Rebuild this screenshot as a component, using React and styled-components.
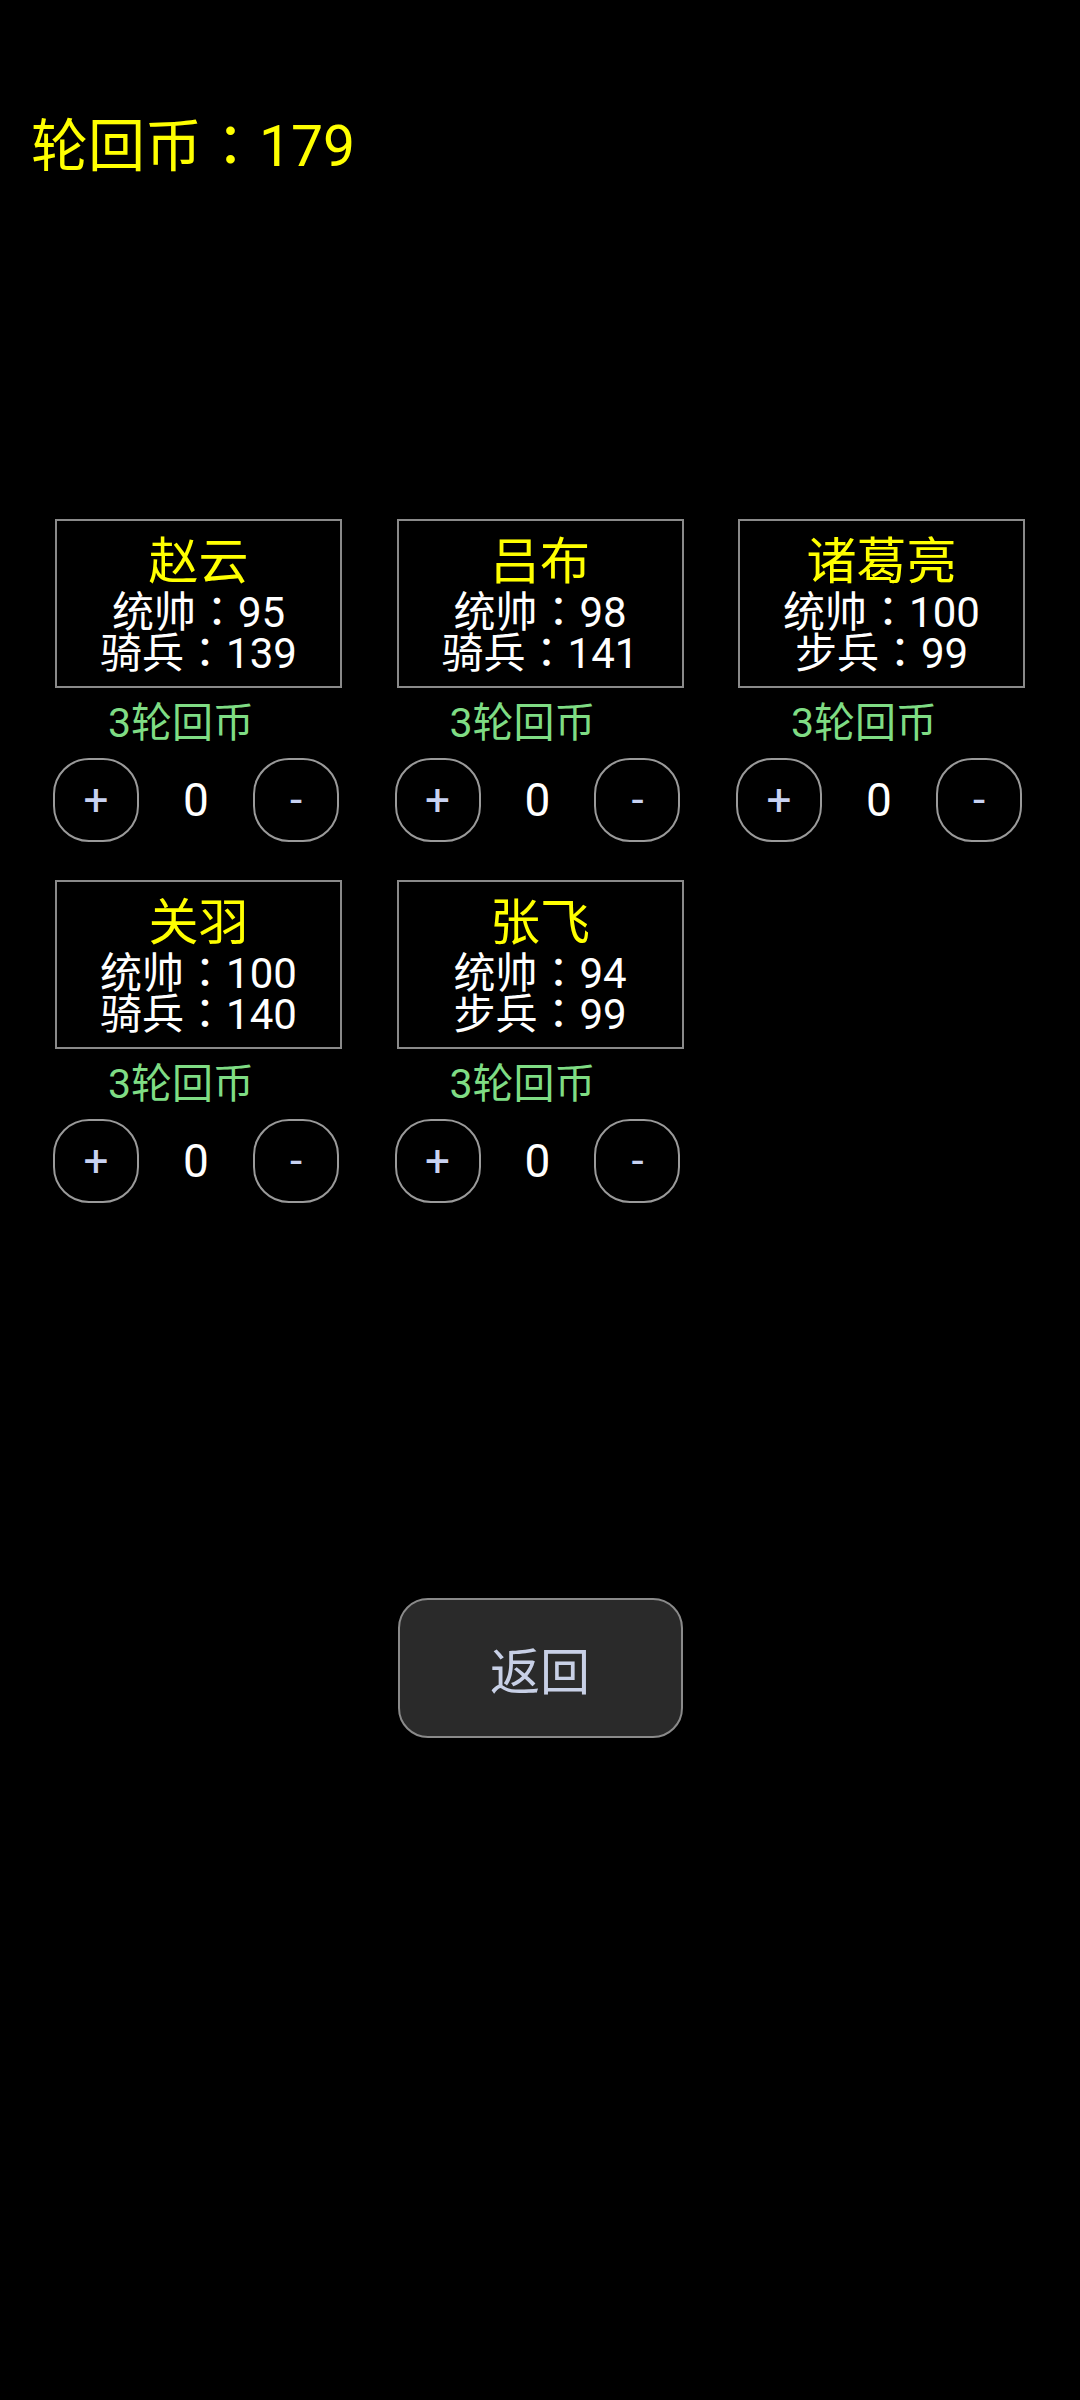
import React from "react";
import styled, { createGlobalStyle } from "styled-components";

const Global = createGlobalStyle`
  html, body { margin: 0; padding: 0; background: #000; }
  body { font-family: Roboto, "Noto Sans CJK SC", sans-serif; }
`;

const Page = styled.div`
  min-height: 2400px;
  background: #000;
  display: flex;
  flex-direction: column;
`;

const Title = styled.div`
  margin: 118px 0 0 31px;
  font-size: 57px;
  line-height: 57px;
  color: #ffff00;
`;

const Colon = styled.span`
  font-family: "Noto Sans CJK JP", "Noto Sans CJK SC", sans-serif;
  line-height: 0;
`;

const Grid = styled.div`
  margin: 344px 0 0 55px;
  display: grid;
  grid-template-columns: repeat(3, 287px);
  column-gap: 54.5px;
  row-gap: 38px;
`;

const Column = styled.div`
  display: flex;
  flex-direction: column;
`;

const Card = styled.div`
  box-sizing: border-box;
  height: 169px;
  border: 2px solid #8a8a8a;
  display: flex;
  flex-direction: column;
  align-items: center;
  justify-content: center;
`;

const Name = styled.div`
  font-size: 50px;
  line-height: 59px;
  color: #ffff00;
`;

const Stat = styled.div`
  font-size: 42px;
  line-height: 41px;
  color: #ffffff;
`;

const Cost = styled.div`
  margin: 11px 0 0 53px;
  font-size: 41px;
  line-height: 48px;
  color: #7fdc84;
`;

const Controls = styled.div`
  margin: 11px 0 0 -2px;
  width: 286px;
  display: flex;
  align-items: center;
  justify-content: space-between;
`;

const RoundButton = styled.div`
  box-sizing: border-box;
  width: 86px;
  height: 84px;
  border: 2px solid #9a9a9a;
  border-radius: 36px;
  display: flex;
  align-items: center;
  justify-content: center;
  font-size: 44px;
  color: #c8d2f2;
`;

const Count = styled.div`
  font-size: 46px;
  color: #ffffff;
`;

const BackButton = styled.div`
  align-self: center;
  margin-top: 395px;
  box-sizing: border-box;
  width: 285px;
  height: 140px;
  border: 2px solid #8a8a8a;
  border-radius: 30px;
  background: #2a2a2a;
  display: flex;
  align-items: center;
  justify-content: center;
  font-size: 50px;
  color: #c8d0e6;
`;

const generals = [
  { name: "赵云", lead: 95, kind: "骑兵", val: 139 },
  { name: "吕布", lead: 98, kind: "骑兵", val: 141 },
  { name: "诸葛亮", lead: 100, kind: "步兵", val: 99 },
  { name: "关羽", lead: 100, kind: "骑兵", val: 140 },
  { name: "张飞", lead: 94, kind: "步兵", val: 99 },
];

export default function App() {
  return (
    <Page>
      <Global />
      <Title>轮回币<Colon>：</Colon>179</Title>
      <Grid>
        {generals.map((g) => (
          <Column key={g.name}>
            <Card>
              <Name>{g.name}</Name>
              <Stat>统帅<Colon>：</Colon>{g.lead}</Stat>
              <Stat>{g.kind}<Colon>：</Colon>{g.val}</Stat>
            </Card>
            <Cost>3轮回币</Cost>
            <Controls>
              <RoundButton>+</RoundButton>
              <Count>0</Count>
              <RoundButton>-</RoundButton>
            </Controls>
          </Column>
        ))}
      </Grid>
      <BackButton>返回</BackButton>
    </Page>
  );
}
